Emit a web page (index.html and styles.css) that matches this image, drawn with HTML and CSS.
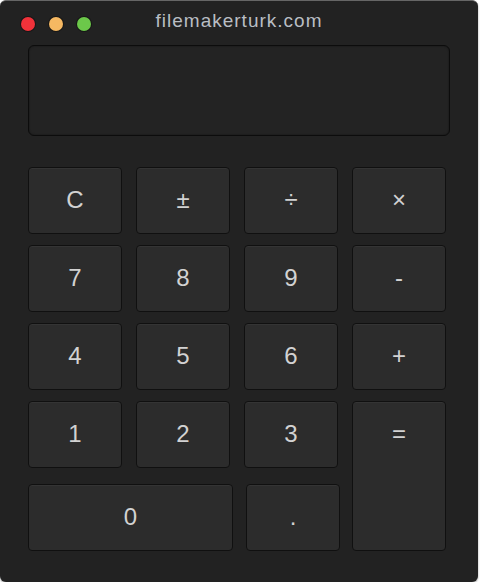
FILE: index.html
```html
<!DOCTYPE html>
<html lang="tr">
<head>
  <meta charset="UTF-8" />
  <meta name="viewport" content="width=device-width, initial-scale=1.0" />
  <title>Hesap Makinesi</title>
  <link rel="stylesheet" href="styles.css">
</head>
<body>
  <div class="window">
    <!-- Pencere başlığı -->
    <div class="titlebar">
      <div class="lights">
        <span class="light red"></span>
        <span class="light yellow"></span>
        <span class="light green"></span>
      </div>
      <div class="title">filemakerturk.com</div>
    </div>

    <div class="display" id="display"></div>

    <div class="keys">
      <button>C</button>
      <button>±</button>
      <button>÷</button>
      <button>×</button>
      <button>7</button>
      <button>8</button>
      <button>9</button>
      <button>-</button>
      <button>4</button>
      <button>5</button>
      <button>6</button>
      <button>+</button>
      <button>1</button>
      <button>2</button>
      <button>3</button>
      <button class="equal">=</button>
      <button class="zero">0</button>
      <button class="dot">.</button>
    </div>
  </div>
</body>
</html>
```

FILE: styles.css
```css
body {
  margin: 0;
  padding: 0;
  background: #fff;
  font-family: 'Liberation Sans', Arial, sans-serif;
}
.window {
  width: 478px;
  height: 582px;
  background: #222;
  border-top: 1px solid #666;
  border-radius: 6px;
  box-shadow: 0 1px 2px rgba(0, 0, 0, 0.4);
  padding: 0 0 0 28px;
  box-sizing: border-box;
}
/* Başlık çubuğu */
.titlebar {
  position: relative;
  height: 44px;
}
.lights {
  display: flex;
  gap: 14px;
  padding-top: 16px;
  margin-left: -7px;
}
.light {
  width: 14px;
  height: 14px;
  border-radius: 50%;
  background: #f0323a;
  box-shadow: 0 0 0 1px rgba(0, 0, 0, 0.35);
}
.light.yellow {
  background: #f5b862;
}
.light.green {
  background: #6cc84a;
}
.title {
  position: absolute;
  top: 9px;
  left: -28px;
  width: 478px;
  text-align: center;
  color: #b9bec4;
  font-size: 19px;
  letter-spacing: 1px;
}
/* Ekran */
.display {
  width: 422px;
  height: 91px;
  box-sizing: border-box;
  background: #232323;
  border: 1px solid #0c0c0c;
  border-radius: 6px;
  box-shadow: inset 0 0 2px rgba(0, 0, 0, 0.5);
}
/* Tuşlar */
.keys {
  display: grid;
  grid-template-columns: repeat(4, 94px);
  grid-template-rows: repeat(4, 67px) 72px;
  column-gap: 14px;
  row-gap: 11px;
  margin-top: 31px;
}
.keys button {
  display: flex;
  justify-content: center;
  align-items: flex-start;
  height: 67px;
  padding: 0;
  background: #2c2c2c;
  border: 1px solid #101010;
  border-radius: 4px;
  box-shadow: inset 0 1px 0 rgba(255, 255, 255, 0.04);
  color: #d2d2d2;
  font-family: 'Liberation Sans', Arial, sans-serif;
  font-size: 24px;
  line-height: 64px;
  cursor: pointer;
}
.keys button:hover {
  background: #333;
}
.keys .equal {
  grid-column: 4;
  grid-row: 4 / 6;
  height: 150px;
}
.keys .zero {
  grid-column: 1 / 3;
  align-self: end;
  margin-right: -3px;
}
.keys .dot {
  grid-column: 3;
  align-self: end;
  margin-left: 2px;
  margin-right: -2px;
}
```
